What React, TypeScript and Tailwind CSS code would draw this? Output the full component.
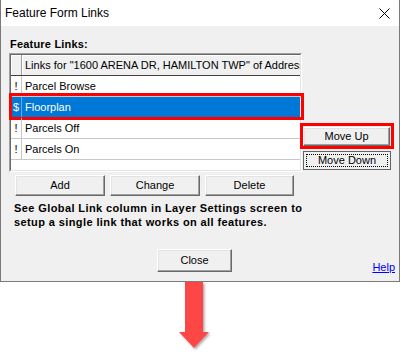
const btn =
  "flex items-center justify-center bg-[#f0f0f0] border border-t-white border-l-white border-r-[#696969] border-b-[#696969] shadow-[inset_-1px_-1px_0_#a0a0a0,inset_1px_1px_0_#e3e3e3] text-[11px] leading-none text-black"

const rows = [
  { mark: "!", name: "Parcel Browse", selected: false },
  { mark: "$", name: "Floorplan", selected: true },
  { mark: "!", name: "Parcels Off", selected: false },
  { mark: "!", name: "Parcels On", selected: false },
]

export default function App() {
  return (
    <div className="w-[401px] h-[354px] bg-white overflow-hidden font-['Liberation_Sans',Arial,sans-serif] text-black">
      {/* dialog */}
      <div className="w-[400px] border-l border-r border-b border-[#7a7a7a] bg-[#f0f0f0] flex flex-col">
        {/* title bar */}
        <div className="h-[26px] bg-white flex items-center justify-between pl-[4px] pr-[9px]">
          <span className="text-[12px]">Feature Form Links</span>
          <svg width="11" height="11" viewBox="0 0 11 11">
            <path d="M0.5 0.5 L10.5 10.5 M10.5 0.5 L0.5 10.5" stroke="#000" strokeWidth="1" fill="none" />
          </svg>
        </div>

        <div className="h-[255px] flex flex-col">
          <div className="pl-[9px] pt-[12px] h-[27px] text-[11px] leading-[13px] font-bold tracking-[0.2px]">Feature Links:</div>

          {/* list + side buttons */}
          <div className="flex">
            <div className="ml-[8px] w-[293px] h-[119px] border border-t-[#a0a0a0] border-l-[#a0a0a0] border-r-white border-b-white">
              <div className="h-full border border-t-[#696969] border-l-[#696969] border-r-[#e3e3e3] border-b-[#e3e3e3] bg-white flex flex-col">
                {/* header */}
                <div className="h-[21px] flex bg-[#f0f0f0] border-b border-[#404040] text-[11px]">
                  <div className="w-[11px] border-r border-[#a0a0a0] shadow-[inset_1px_1px_0_#fff]" />
                  <div className="flex-1 min-w-0 pl-[3px] flex items-center whitespace-nowrap overflow-hidden shadow-[inset_1px_1px_0_#fff]">
                    Links for "1600 ARENA DR, HAMILTON TWP" of Address
                  </div>
                </div>
                {rows.map(r => (
                  <div
                    key={r.name}
                    className={`relative h-[21px] flex text-[11px] border-b ${
                      r.selected ? "bg-[#0078d7] text-white border-[#0078d7]" : "border-[#c8c8c8]"
                    }`}
                  >
                    <div
                      className={`w-[11px] flex items-center justify-center border-r ${
                        r.selected ? "border-[#6aa8e4]" : "border-[#c8c8c8]"
                      }`}
                    >
                      {r.mark}
                    </div>
                    <div className="flex-1 pl-[3px] flex items-center">{r.name}</div>
                    {r.selected && (
                      <div className="absolute -left-[2px] -right-[4px] -top-[4px] -bottom-[3px] border-[3px] border-[#ff0000]" />
                    )}
                  </div>
                ))}
              </div>
            </div>

            <div className="ml-[1px] pt-[74px] flex flex-col gap-[5px]">
              <div className="relative">
                <div className={`${btn} w-[87px] h-[19px]`}>Move Up</div>
                <div className="absolute -left-[3px] -right-[3px] -top-[4px] -bottom-[3px] border-[3px] border-[#ff0000]" />
              </div>
              <div className="w-[88px] h-[19px] border border-[#646464] bg-[#f0f0f0] flex items-center justify-center">
                <div className="w-[82px] h-[13px] border border-dotted border-black flex items-center justify-center text-[11px] leading-none">
                  Move Down
                </div>
              </div>
            </div>
          </div>

          {/* add / change / delete */}
          <div className="mt-[3px] ml-[14px] flex gap-[5px]">
            <div className={`${btn} w-[90px] h-[21px]`}>Add</div>
            <div className={`${btn} w-[90px] h-[21px]`}>Change</div>
            <div className={`${btn} w-[89px] h-[21px]`}>Delete</div>
          </div>

          <p className="mt-[5px] ml-[13px] text-[11px] leading-[14px] font-bold tracking-[0.4px]">
            See Global Link column in Layer Settings screen to
            <br />
            setup a single link that works on all features.
          </p>

          <div className="mt-[20px] flex items-start">
            <div className={`${btn} ml-[156px] w-[75px] h-[23px]`}>Close</div>
            <span className="ml-auto mr-[4px] mt-[12px] text-[11px] leading-[13px] text-[#0000ff] underline">Help</span>
          </div>
        </div>
      </div>

      {/* annotation arrow */}
      <div className="pl-[176px]">
        <svg width="40" height="70" viewBox="0 0 40 70">
          <defs>
            <filter id="sh" x="-30%" y="-10%" width="160%" height="130%">
              <feDropShadow dx="1.5" dy="1.5" stdDeviation="1.2" floodColor="#000" floodOpacity="0.35" />
            </filter>
          </defs>
          <path d="M9 0 H27 V50 H33 L18 66 L3 50 H9 Z" fill="#fd4646" filter="url(#sh)" />
        </svg>
      </div>
    </div>
  )
}
